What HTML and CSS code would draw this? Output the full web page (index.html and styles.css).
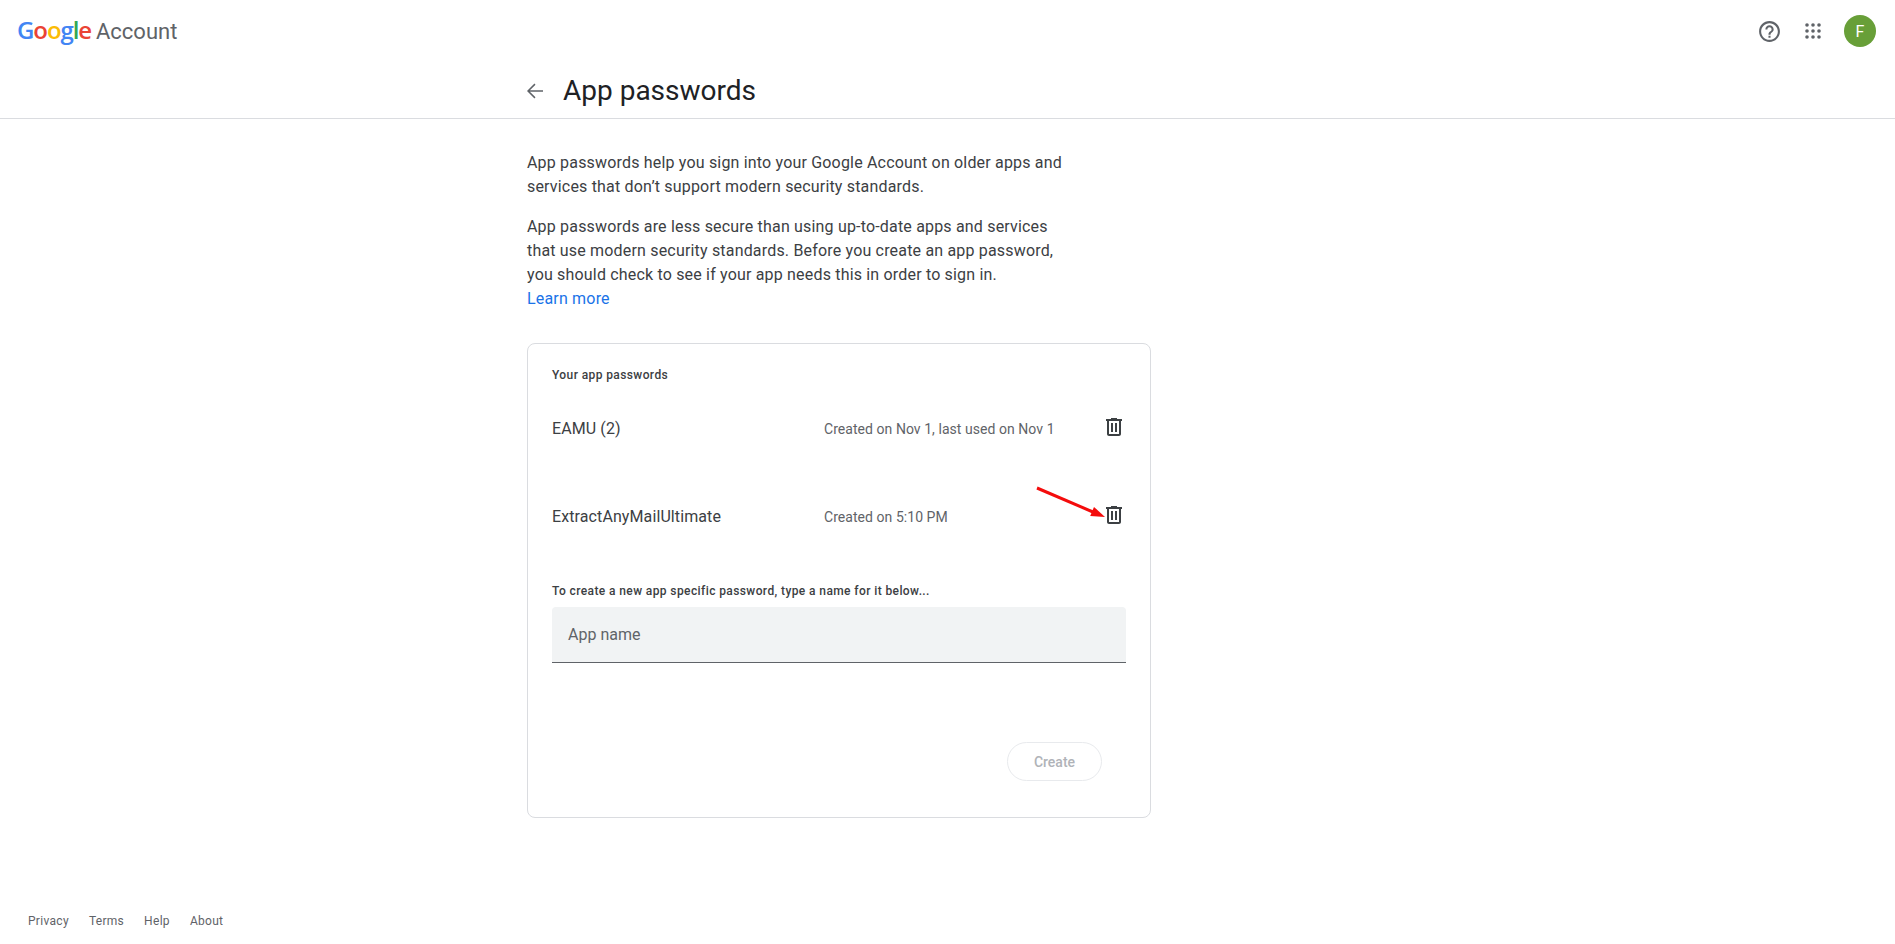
FILE: index.html
```html
<!DOCTYPE html>
<html lang="en">
<head>
<meta charset="utf-8">
<title>App passwords</title>
<link rel="stylesheet" href="styles.css">
</head>
<body>
<div class="page">
  <header class="topbar">
    <a class="brand"><span class="google"><span class="c-blue">G</span><span class="c-red">o</span><span class="c-yellow">o</span><span class="c-blue">g</span><span class="c-green">l</span><span class="c-red">e</span></span><span class="account">Account</span></a>
    <div class="top-actions">
      <svg class="icon-help" viewBox="0 0 24 24"><path d="M11 18h2v-2h-2v2zm1-16C6.48 2 2 6.48 2 12s4.48 10 10 10 10-4.48 10-10S17.52 2 12 2zm0 18c-4.41 0-8-3.59-8-8s3.59-8 8-8 8 3.59 8 8-3.59 8-8 8zm0-14c-2.21 0-4 1.79-4 4h2c0-1.1.9-2 2-2s2 .9 2 2c0 2-3 1.75-3 5h2c0-2.25 3-2.5 3-5 0-2.21-1.79-4-4-4z"/></svg>
      <svg class="icon-apps" viewBox="0 0 24 24"><circle cx="4" cy="4" r="2.4"/><circle cx="12" cy="4" r="2.4"/><circle cx="20" cy="4" r="2.4"/><circle cx="4" cy="12" r="2.4"/><circle cx="12" cy="12" r="2.4"/><circle cx="20" cy="12" r="2.4"/><circle cx="4" cy="20" r="2.4"/><circle cx="12" cy="20" r="2.4"/><circle cx="20" cy="20" r="2.4"/></svg>
      <div class="avatar">F</div>
    </div>
  </header>
  <div class="titlebar">
    <svg class="icon-back" viewBox="0 0 24 24"><path d="M20 11.25H6.9l5.6-5.6L11.45 4.6 4 12l7.45 7.4 1.05-1.05-5.6-5.6H20z"/></svg>
    <h1 class="title">App passwords</h1>
  </div>
  <main class="content">
    <p class="intro">App passwords help you sign into your Google Account on older apps and services that don’t support modern security standards.</p>
    <p class="intro second">App passwords are less secure than using up-to-date apps and services that use modern security standards. Before you create an app password, you should check to see if your app needs this in order to sign in.<br><a class="link">Learn more</a></p>
    <section class="card">
      <h2 class="label">Your app passwords</h2>
      <div class="row first">
        <span class="app-name">EAMU (2)</span>
        <span class="app-meta">Created on Nov 1, last used on Nov 1</span>
        <svg class="icon-trash" viewBox="0 0 24 24"><path d="M15 4V3H9v1H4v2h1v13c0 1.1.9 2 2 2h10c1.1 0 2-.9 2-2V6h1V4h-5zm2 15H7V6h10v13zM9 8h2v9H9zm4 0h2v9h-2z"/></svg>
      </div>
      <div class="row">
        <span class="app-name">ExtractAnyMailUltimate</span>
        <span class="app-meta">Created on 5:10 PM</span>
        <svg class="icon-trash" viewBox="0 0 24 24"><path d="M15 4V3H9v1H4v2h1v13c0 1.1.9 2 2 2h10c1.1 0 2-.9 2-2V6h1V4h-5zm2 15H7V6h10v13zM9 8h2v9H9zm4 0h2v9h-2z"/></svg>
        <svg class="annotation" viewBox="0 0 72 34"><path class="shaft" d="M2 2 L58 26"/><path class="head" d="M70 31 L55.2 30.1 L59 20.9 Z"/></svg>
      </div>
      <h2 class="label create-label">To create a new app specific password, type a name for it below...</h2>
      <div class="field">App name</div>
      <div class="actions"><button class="create" type="button">Create</button></div>
    </section>
  </main>
  <footer class="footer">
    <a>Privacy</a><a>Terms</a><a>Help</a><a>About</a>
  </footer>
</div>
</body>
</html>
```
FILE: styles.css
```css
* { box-sizing: border-box; }
html, body { margin: 0; padding: 0; height: 100%; background: #fff; }
body { font-family: Roboto, "Noto Sans", sans-serif; color: #3c4043; overflow: hidden; }
.page { display: flex; flex-direction: column; height: 944px; }

.topbar { height: 62px; display: flex; align-items: center; justify-content: space-between; padding: 0 19px 0 17px; flex: none; }
.brand { display: flex; align-items: baseline; gap: 5px; }
.google { font-family: "Open Sans", Roboto, sans-serif; font-size: 24px; font-weight: 600; letter-spacing: -1.1px; line-height: 30px; }
.c-blue { color: #4285f4; } .c-red { color: #ea4335; } .c-yellow { color: #fbbc05; } .c-green { color: #34a853; }
.account { font-size: 22px; color: #5f6368; line-height: 30px; }
.top-actions { display: flex; align-items: center; }
.icon-help { width: 25px; height: 25px; fill: #5f6368; margin-right: 22px; }
.icon-apps { width: 18px; height: 18px; fill: #5f6368; margin-right: 22px; }
.avatar { width: 32px; height: 32px; border-radius: 50%; background: #689f38; color: #fff; font-size: 16px; display: flex; align-items: center; justify-content: center; }

.titlebar { height: 57px; border-bottom: 1px solid #dadce0; display: flex; align-items: center; padding: 0 0 0 523px; flex: none; }
.icon-back { width: 24px; height: 24px; fill: #5f6368; margin: 2px 16px 0 0; }
.title { margin: 0; font-size: 28px; font-weight: 400; color: #202124; line-height: 36px; padding-top: 1px; }

.content { width: 624px; margin: 0 0 0 527px; padding-top: 32px; flex: none; }
.intro { margin: 0; font-size: 16px; letter-spacing: .18px; line-height: 24px; color: #3c4043; width: 544px; }
.intro.second { margin-top: 16px; }
.link { color: #1a73e8; }

.card { margin-top: 32px; height: 475px; border: 1px solid #dadce0; border-radius: 8px; padding: 23px 24px 0; }
.label { margin: 0; font-size: 12px; font-weight: 500; letter-spacing: .4px; line-height: 16px; color: #3c4043; }
.row { position: relative; display: flex; align-items: center; height: 88px; }
.row.first { margin-top: 2px; }
.app-name { width: 272px; font-size: 16px; letter-spacing: .1px; color: #3c4043; padding-bottom: 2px; }
.app-meta { font-size: 14px; letter-spacing: .05px; color: #5f6368; }
.icon-trash { position: absolute; left: 550px; top: 30px; width: 24px; height: 24px; fill: #3c4043; }
.annotation { position: absolute; left: 483px; top: 13px; width: 72px; height: 34px; }
.shaft { stroke: #f40c0c; stroke-width: 3; fill: none; }
.head { fill: #f40c0c; }
.create-label { margin-top: 22px; }
.field { margin-top: 8px; width: 574px; height: 56px; background: #f1f3f4; border-bottom: 1px solid #5f6368; border-radius: 4px 4px 0 0; padding: 0 16px; display: flex; align-items: center; font-size: 16px; color: #5f6368; }
.actions { display: flex; justify-content: flex-end; padding-right: 24px; margin-top: 79px; }
.create { width: 95px; height: 39px; border: 1px solid #e8eaed; border-radius: 20px; background: #fff; color: #b0b3b8; font-family: inherit; font-size: 14px; font-weight: 500; padding: 0; }

.footer { margin-top: auto; height: 31px; display: flex; gap: 20px; padding: 0 0 0 28px; font-size: 12px; letter-spacing: .3px; color: #5f6368; line-height: 16px; }
```
